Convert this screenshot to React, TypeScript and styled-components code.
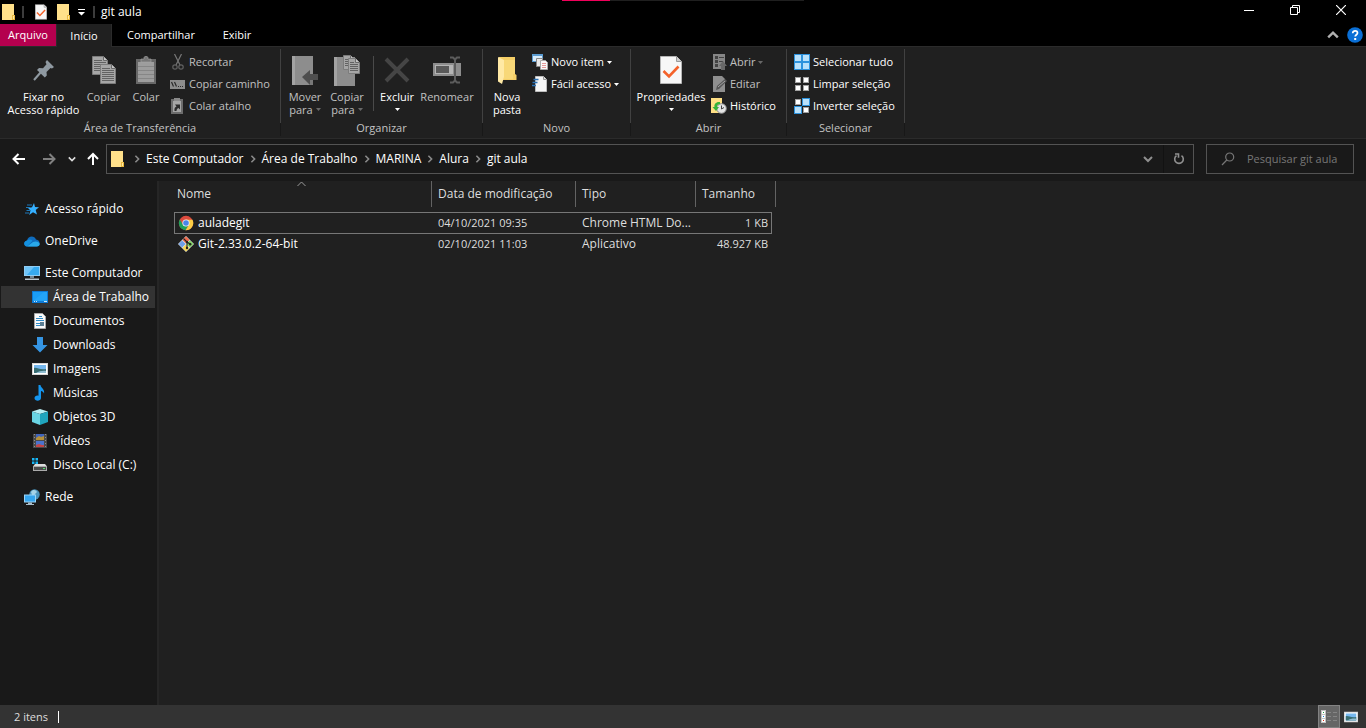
import React from "react";
import styled, { createGlobalStyle, css } from "styled-components";

const GlobalStyle = createGlobalStyle`
  *, *::before, *::after { box-sizing: border-box; }
  body {
    margin: 0;
    background: #202020;
    color: #ffffff;
    font-family: "Open Sans", "Noto Sans", sans-serif;
    font-size: 12px;
    line-height: 16px;
  }
  button, input { font: inherit; color: inherit; }
  svg { display: block; flex: none; }
`;

const Window = styled.div`
  display: flex;
  flex-direction: column;
  min-height: 100vh;
`;

const plainButton = css`
  border: 0;
  padding: 0;
  margin: 0;
  background: transparent;
`;

/* Title bar */

const TitleBar = styled.header`
  position: relative;
  display: flex;
  align-items: center;
  height: 24px;
  background: #000000;
`;

const QuickTools = styled.div`
  display: flex;
  align-items: center;
  padding-left: 1px;
`;

const QuickButton = styled.button<{ $width: number }>`
  ${plainButton}
  display: flex;
  justify-content: center;
  width: ${(p) => p.$width}px;
`;

const TitleDivider = styled.span`
  width: 2px;
  height: 12px;
  margin: 0 5px;
  background: #3c3c3c;
`;

const WindowTitle = styled.h1`
  margin: 0;
  padding-left: 1px;
  font-size: 12px;
  font-weight: 400;
`;

const WindowButtons = styled.div`
  display: flex;
  align-self: stretch;
  margin-left: auto;
  padding-right: 2px;
`;

const WindowButton = styled.button`
  ${plainButton}
  display: flex;
  align-items: center;
  justify-content: center;
  width: 46px;
  height: 20px;
`;

const ProgressStrip = styled.div`
  position: absolute;
  top: 0;
  left: 50%;
  width: 242px;
  height: 1px;
  margin-left: -121px;
  background: #1f1f1f;
`;

const ProgressValue = styled.div`
  width: 48px;
  height: 1px;
  background: #f0005a;
`;

/* Ribbon tabs */

const TabBar = styled.nav`
  display: flex;
  height: 22px;
  font-size: 11px;
  background: #000000;
`;

const Tab = styled.button<{ $variant?: "file" | "active"; $width: number }>`
  ${plainButton}
  width: ${(p) => p.$width}px;
  height: 22px;
  line-height: 22px;
  ${(p) => p.$variant === "file" && css`background: #b4004e;`}
  ${(p) =>
    p.$variant === "active" &&
    css`
      height: 23px;
      position: relative;
      background: #202020;
      border: 1px solid #2b2b2b;
      border-width: 0 1px;
    `}
`;

const TabTools = styled.div`
  display: flex;
  align-items: center;
  gap: 8px;
  margin-left: auto;
  padding-right: 3px;
`;

const IconButton = styled.button`
  ${plainButton}
  display: flex;
`;

/* Ribbon */

const Ribbon = styled.section`
  display: flex;
  height: 93px;
  padding-top: 2px;
  font-size: 11px;
  background: #202020;
  border-top: 1px solid #2b2b2b;
  border-bottom: 1px solid #2b2b2b;
`;

const Group = styled.div<{ $width: number }>`
  display: flex;
  flex-direction: column;
  width: ${(p) => p.$width}px;
  height: 87px;
  border-right: 1px solid;
  border-image: linear-gradient(#414141 84%, #181818 84%) 1;
`;

const GroupBody = styled.div<{ $pad: number }>`
  display: flex;
  height: 72px;
  padding-left: ${(p) => p.$pad}px;
`;

const GroupLabel = styled.div`
  height: 16px;
  text-align: center;
  color: #c3c3c3;
`;

const BigButton = styled.button<{ $width: number; $muted?: boolean }>`
  ${plainButton}
  display: flex;
  flex-direction: column;
  align-items: center;
  width: ${(p) => p.$width}px;
  padding-top: 4px;
  line-height: 13px;
  white-space: nowrap;
  color: ${(p) => (p.$muted ? "#c0c0c0" : "#ffffff")};
`;

const BigIcon = styled.span`
  display: flex;
  align-items: center;
  justify-content: center;
  width: 32px;
  height: 34px;
  margin-bottom: 3px;
`;

const BigLine = styled.span`
  display: flex;
  align-items: center;
  height: 13px;
  gap: 3px;
`;

const SmallList = styled.div<{ $gap: number }>`
  display: flex;
  flex-direction: column;
  padding-top: 2px;
  margin-left: ${(p) => p.$gap}px;
`;

const SmallButton = styled.button<{ $muted?: boolean }>`
  ${plainButton}
  display: flex;
  align-items: center;
  gap: 3px;
  height: 22px;
  white-space: nowrap;
  color: ${(p) => (p.$muted ? "#c0c0c0" : "#ffffff")};
`;

const InnerDivider = styled.span`
  width: 1px;
  height: 55px;
  margin: 7px 2px 0 5px;
  background: #4a4a4a;
`;

/* Address row */

const AddressRow = styled.div`
  display: flex;
  align-items: center;
  height: 42px;
  padding: 0 12px 2px 0;
  background: #191919;
`;

const NavButtons = styled.div`
  display: flex;
  align-items: center;
  width: 106px;
`;

const NavButton = styled.button<{ $width: number }>`
  ${plainButton}
  display: flex;
  justify-content: center;
  width: ${(p) => p.$width}px;
`;

const AddressBox = styled.div`
  display: flex;
  align-items: center;
  flex: 1;
  height: 30px;
  padding-left: 4px;
  border: 1px solid #535353;
`;

const CrumbIcon = styled.span`
  width: 17px;
`;

const Crumb = styled.span`
  display: flex;
  align-items: center;
`;

const CrumbButton = styled.button`
  ${plainButton}
  white-space: nowrap;
`;

const CrumbArrow = styled.span`
  display: flex;
  justify-content: center;
  width: 18px;
`;

const AddressTools = styled.div`
  display: flex;
  align-self: stretch;
  align-items: center;
  margin-left: auto;
`;

const AddressTool = styled.button`
  ${plainButton}
  display: flex;
  align-items: center;
  justify-content: center;
  width: 30px;
  height: 28px;
  & + & { border-left: 1px solid #121212; }
`;

const SearchBox = styled.label`
  display: flex;
  align-items: center;
  gap: 12px;
  width: 148px;
  height: 30px;
  margin-left: 12px;
  padding-left: 14px;
  font-size: 11px;
  border: 1px solid #535353;
`;

const SearchInput = styled.input`
  flex: 1;
  min-width: 0;
  padding: 0;
  border: 0;
  outline: 0;
  background: transparent;
  &::placeholder { color: #777777; opacity: 1; }
`;

/* Body */

const Body = styled.div`
  display: flex;
  flex: 1;
`;

const Sidebar = styled.nav`
  width: 159px;
  padding: 17px 2px 0 1px;
  background: #191919;
  border-right: 2px solid #262626;
`;

const SideList = styled.ul`
  display: flex;
  flex-direction: column;
  gap: 2px;
  margin: 0 0 10px;
  padding: 0;
  list-style: none;
`;

const SideLink = styled.a<{ $child?: boolean; $active?: boolean }>`
  display: flex;
  align-items: center;
  gap: 5px;
  height: 22px;
  padding-left: ${(p) => (p.$child ? 31 : 23)}px;
  color: #ffffff;
  text-decoration: none;
  white-space: nowrap;
  background: ${(p) => (p.$active ? "#333333" : "transparent")};
`;

const Content = styled.main`
  flex: 1;
  padding-left: 15px;
  background: #202020;
`;

const FileTable = styled.table`
  width: 602px;
  table-layout: fixed;
  border-collapse: separate;
  border-spacing: 0;
`;

const HeadCell = styled.th<{ $width: number; $first?: boolean }>`
  position: relative;
  width: ${(p) => p.$width}px;
  height: 26px;
  padding: 0 0 0 ${(p) => (p.$first ? 3 : 6)}px;
  border-right: 1px solid #636363;
  font-weight: 400;
  text-align: left;
  color: #dedede;
`;

const SortMark = styled.span`
  position: absolute;
  top: 0;
  left: 50%;
  margin-left: -6px;
`;

const Rows = styled.tbody`
  &::before {
    content: "";
    display: block;
    height: 5px;
  }
`;

const Row = styled.tr<{ $focused?: boolean }>`
  position: relative;
  ${(p) =>
    p.$focused &&
    css`
      &::after {
        content: "";
        position: absolute;
        inset: 0 4px -1px 0;
        border: 1px solid #777777;
      }
    `}
`;

const Cell = styled.td`
  height: 21px;
  padding: 0 8px 0 6px;
  color: #dedede;
  white-space: nowrap;
`;

const NameCell = styled(Cell)`
  padding-left: 4px;
  color: #ffffff;
`;

const DateCell = styled(Cell)`
  font-size: 11px;
`;

const SizeCell = styled(Cell)`
  font-size: 11px;
  text-align: right;
`;

const FileName = styled.span`
  display: flex;
  align-items: center;
  gap: 4px;
`;

/* Status bar */

const StatusBar = styled.footer`
  display: flex;
  align-items: center;
  height: 23px;
  padding: 0 4px 0 14px;
  font-size: 11px;
  background: #333333;
`;

const StatusText = styled.span`
  padding-right: 10px;
  border-right: 1px solid #ffffff;
  line-height: 12px;
  color: #dedede;
`;

const ViewButtons = styled.div`
  display: flex;
  margin-left: auto;
`;

const ViewButton = styled.button<{ $active?: boolean }>`
  ${plainButton}
  display: flex;
  align-items: center;
  justify-content: center;
  width: 22px;
  height: 23px;
  ${(p) =>
    p.$active &&
    css`
      background: #666666;
      border: 1px solid #838383;
    `}
`;

/* Icons */

const FolderIcon = () => (
  <svg width="14" height="16" viewBox="0 0 14 16">
    <path d="M0 0h12v11h1v5H0z" fill="#ffe08a" />
    <path d="M10 11h3v5h-3z" fill="#e9b93f" />
    <path d="M11 12h1v3h-1z" fill="#ffe9a8" />
  </svg>
);

const PropsIcon = ({ w, h }: { w: number; h: number }) => (
  <svg width={w} height={h} viewBox="0 0 22 28">
    <path d="M.5.5h16l5 5v22H.5z" fill="#f7f7f7" stroke="#b5b5b5" />
    <path d="M16.5.5v5h5" fill="#cfcfcf" stroke="#999" />
    <path d="M3.5 15l5.500 5.500L18.500 10.500" fill="none" stroke="#f4622a" strokeWidth="2.600" />
  </svg>
);

const QuickMenuIcon = () => (
  <svg width="7" height="7" viewBox="0 0 7 7">
    <path d="M0 0h7v1H0zM0 3h7L3.500 6.500z" fill="#fff" />
  </svg>
);

const DownMark = ({ muted }: { muted?: boolean }) => (
  <svg width="5" height="3" viewBox="0 0 5 3">
    <path d="M0 0h5L2.500 3z" fill={muted ? "#686868" : "#fff"} />
  </svg>
);

const MinIcon = () => (
  <svg width="10" height="10" viewBox="0 0 10 10"><path d="M0 5h10v1H0z" fill="#fff" /></svg>
);

const RestoreIcon = () => (
  <svg width="10" height="10" viewBox="0 0 10 10" fill="none" stroke="#fff">
    <path d="M.5 2.500h7v7h-7zM2.500 2V.5h7v7H8" />
  </svg>
);

const CloseIcon = () => (
  <svg width="10" height="10" viewBox="0 0 10 10" fill="none" stroke="#fff" strokeWidth="1.200">
    <path d="M0 0l10 10M10 0L0 10" />
  </svg>
);

const Chevron = ({ dir, color, size = 10 }: { dir: "up" | "down" | "right"; color: string; size?: number }) => (
  <svg width={size} height={size} viewBox="0 0 10 10" fill="none" stroke={color} strokeWidth="2">
    <path d={dir === "up" ? "M1 7l4-4 4 4" : dir === "down" ? "M1 3l4 4 4-4" : "M3 1l4 4-4 4"} />
  </svg>
);

const HelpIcon = () => (
  <svg width="16" height="16" viewBox="0 0 16 16">
    <circle cx="8" cy="8" r="7.800" fill="#0a6fd6" />
    <path d="M5.700 6.200c0-3.200 4.800-3 4.800-.2 0 1.700-2.300 1.800-2.300 3.600" fill="none" stroke="#fff" strokeWidth="1.700" />
    <path d="M7.200 11h2v2h-2z" fill="#fff" />
  </svg>
);

const PinIcon = () => (
  <svg width="22" height="22" viewBox="0 0 22 22">
    <path d="M14 1l7 7-2 1.500-1.500-.5-4 4 .3 3.500-2 2L4 11l2-2 4 .3 3.500-4L12.500 3z" fill="#8f99a1" />
    <path d="M8 13l-7 8" stroke="#8f99a1" strokeWidth="2" />
  </svg>
);

const Sheet = ({ x, y, w, h }: { x: number; y: number; w: number; h: number }) => (
  <g>
    <path d={`M${x + 0.5} ${y + 0.5}h${w - 5}l4 4v${h - 5}h-${w - 1}z`} fill="#a6a6a6" stroke="#7c7c7c" />
    <path d={`M${x + w - 4.5} ${y + 0.5}v4h4`} fill="#c4c4c4" stroke="#6b6b6b" />
    {Array.from({ length: Math.floor((h - 6) / 2) }, (_, i) => (
      <path key={i} d={`M${x + 2} ${y + 4.5 + i * 2}h${i === 0 ? w - 8 : w - 4}`} stroke="#626262" />
    ))}
  </g>
);

const CopyIcon = () => (
  <svg width="24" height="28" viewBox="0 0 24 28">
    <Sheet x={0} y={0} w={16} h={19} />
    <Sheet x={8} y={8} w={16} h={20} />
  </svg>
);

const PasteIcon = () => (
  <svg width="20" height="28" viewBox="0 0 20 28">
    <path d="M0 3h20v25H0z" fill="#686868" />
    <path d="M2 6h16v20H2z" fill="#9d9d9d" />
    <path d="M5 3h3V1.500C8 0 12 0 12 1.500V3h3v3H5z" fill="#777" stroke="#aaa" strokeWidth=".6" />
    <path d="M2 10.500h16M2 14.500h16M2 18.500h16M2 22.500h16" stroke="#868686" />
  </svg>
);

const CutIcon = () => (
  <svg width="16" height="16" viewBox="0 0 16 16" fill="none" stroke="#777" strokeWidth="1.200">
    <path d="M4.500 0L10 11M11.500 0L6 11" />
    <circle cx="5" cy="13" r="2.200" stroke="#606060" />
    <circle cx="11" cy="13" r="2.200" stroke="#606060" />
  </svg>
);

const PathIcon = () => (
  <svg width="16" height="16" viewBox="0 0 16 16">
    <path d="M0 4h15v9H0z" fill="#8d8d8d" />
    <path d="M1.500 6l2 4.500M4.500 6l2 4.500" stroke="#2a2a2a" strokeWidth="1.200" />
    <path d="M8 10h1v1H8zM10 10h1v1h-1zM12 10h1v1h-1z" fill="#2a2a2a" />
  </svg>
);

const ShortcutIcon = () => (
  <svg width="16" height="16" viewBox="0 0 16 16">
    <path d="M1 1h12v15H1z" fill="#6c6c6c" />
    <path d="M3 3h8v11H3z" fill="#a5a5a5" />
    <path d="M4 0h6v3H4z" fill="#8a8a8a" />
    <path d="M4.500 13c-.5-3 .8-4 2-4.500L5 6.500h5v5L8.500 10C7 10.500 6.500 12 6.500 13z" fill="#2b2b2b" />
  </svg>
);

const MoveIcon = () => (
  <svg width="28" height="29" viewBox="0 0 28 29">
    <path d="M1 0h21v29H1z" fill="#8d8d8d" />
    <path d="M1 0h3v29H1z" fill="#a3a3a3" />
    <path d="M19 18h3v11h-3z" fill="#777" />
    <path d="M11 21l8-7v4h8v6h-8v5z" fill="#4e4e4e" />
  </svg>
);

const CopyToIcon = () => (
  <svg width="28" height="31" viewBox="0 0 28 31">
    <path d="M1 2h21v29H1z" fill="#8d8d8d" />
    <path d="M1 2h3v29H1z" fill="#a3a3a3" />
    <Sheet x={10} y={0} w={12} h={15} />
    <Sheet x={15} y={3} w={12} h={16} />
  </svg>
);

const DeleteIcon = () => (
  <svg width="26" height="26" viewBox="0 0 26 26">
    <path d="M2 2l22 22M24 2L2 24" stroke="#454545" strokeWidth="4" />
  </svg>
);

const RenameIcon = () => (
  <svg width="28" height="28" viewBox="0 0 28 28">
    <path d="M0 7h28v13H0z" fill="#8d8d8d" />
    <path d="M2 9h18v9H2z" fill="#b4b4b4" />
    <path d="M3 10h13v7H3z" fill="#595959" />
    <path d="M17 1.500h3l2 2 2-2h3M22 3v21M17 26.500h3l2-2 2 2h3" fill="none" stroke="#5c5c5c" strokeWidth="2" />
  </svg>
);

const NewFolderIcon = () => (
  <svg width="20" height="28" viewBox="0 0 20 28">
    <path d="M2 1h16v17l1.500 1v5H2z" fill="#f5cf67" />
    <path d="M1 1l6 3v17l-2 7-4-2.500z" fill="#ffe9a5" />
    <path d="M7 4h11v14h-2v5H7z" fill="#f8d878" />
  </svg>
);

const NewItemIcon = () => (
  <svg width="16" height="16" viewBox="0 0 16 16">
    <path d="M0 0h11v8H0z" fill="#5b9bd0" />
    <path d="M1 2h9v5H1z" fill="#d9ecfa" />
    <path d="M4.500 4.500h6v8h-6z" fill="#e9e9e9" stroke="#888" />
    <path d="M8.500 6.500h5l2 2v7h-7z" fill="#fafafa" stroke="#aaa" />
    <path d="M10 9.500h4M10 11.500h4M10 13.500h4" stroke="#e69a9a" />
  </svg>
);

const EasyAccessIcon = () => (
  <svg width="16" height="16" viewBox="0 0 16 16">
    <path d="M3.500.5h8l3 3v12h-11z" fill="#f6f6f6" stroke="#bdbdbd" />
    <path d="M11.500.5v3h3" fill="#ddd" stroke="#999" />
    <path d="M1.500 3.500h5M.5 6.500h5M0 9.500h4" stroke="#2c72b5" strokeWidth="1.400" />
  </svg>
);

const OpenIcon = () => (
  <svg width="16" height="16" viewBox="0 0 16 16">
    <path d="M2 0h12v15H2z" fill="#868686" />
    <path d="M4 2h3v3H4zM4 6h3v3H4zM4 10h3v3H4zM8 3h5v1H8zM8 7h4v1H8z" fill="#424242" />
    <path d="M10 16v-4H8l4-5 4 5h-2v4z" fill="#686868" />
  </svg>
);

const EditIcon = () => (
  <svg width="16" height="16" viewBox="0 0 16 16">
    <path d="M2 0h9l3 3v13H2z" fill="#8f8f8f" />
    <path d="M5 14l1-4 8-7 2 2-8 8z" fill="#555" />
    <path d="M7 11l7-6" stroke="#a5a5a5" />
  </svg>
);

const HistoryIcon = () => (
  <svg width="16" height="16" viewBox="0 0 16 16">
    <path d="M0 0h11v15H0z" fill="#ffdf85" />
    <circle cx="10.500" cy="10.500" r="4.800" fill="#e4e4e4" stroke="#8c8c8c" />
    <path d="M10.500 7.500v3.500l2.500-1.500" fill="none" stroke="#444" />
    <path d="M9 4c-4-.5-6 2-5.500 5H1.500L5 13l3-4H6c0-2 1-3 3-2.500z" fill="#35b338" />
  </svg>
);

const GridIcon = ({ kind }: { kind: "all" | "none" | "invert" }) => {
  const marked = (i: number) => kind === "all" || (kind === "invert" && (i === 1 || i === 2));
  return (
    <svg width="16" height="16" viewBox="0 0 16 16">
      {[0, 1, 2, 3].map((i) => {
        const x = (i % 2) * 8;
        const y = Math.floor(i / 2) * 8;
        return marked(i) ? (
          <g key={i}>
            <rect x={x} y={y} width="8" height="8" fill="#2e93dd" />
            <rect x={x + 1} y={y + 1} width="6" height="6" fill="#b9e1fb" />
          </g>
        ) : (
          <g key={i}>
            <rect x={x + 1} y={y + 1} width="6" height="6" fill="#a2a2a2" />
            <rect x={x + 2} y={y + 2} width="4" height="4" fill="#fff" />
          </g>
        );
      })}
    </svg>
  );
};

const Arrow = ({ dir, color }: { dir: "left" | "right" | "up"; color: string }) => (
  <svg width="14" height="14" viewBox="0 0 14 14" fill="none" stroke={color} strokeWidth="2">
    <path
      d={
        dir === "left"
          ? "M6.500 2L1.500 7l5 5M1.500 7H13"
          : dir === "right"
          ? "M7.500 2l5 5-5 5M12.500 7H1"
          : "M2 7l5-5 5 5M7 2v11"
      }
    />
  </svg>
);

const RefreshIcon = () => (
  <svg width="12" height="12" viewBox="0 0 12 12" fill="none" stroke="#8f8f8f" strokeWidth="1.600">
    <path d="M8.500 2.600A4.300 4.300 0 1 1 3.500 2.600" />
    <path d="M2 1h3.500v3.800" />
  </svg>
);

const SearchIcon = () => (
  <svg width="14" height="14" viewBox="0 0 14 14" fill="none" stroke="#777" strokeWidth="1.200">
    <circle cx="8.700" cy="5" r="4" />
    <path d="M5.800 8L1 13" />
  </svg>
);

const StarIcon = () => (
  <svg width="16" height="16" viewBox="0 0 16 16">
    <path d="M10 2l1 4 4 .3-3.300 2.700 1.300 4.500-4-2.300-3.800 2.800L6.500 9.500 4 7l4-.8z" fill="#35b0ff" />
    <path d="M3 4h5M2 6.500h4M2.500 9.500h4M1 12h4" stroke="#1d79b9" strokeWidth="1.200" />
  </svg>
);

const CloudIcon = () => (
  <svg width="16" height="16" viewBox="0 0 16 16">
    <path d="M3.500 13.500C-.8 13.300-.5 8 3 7.500 4 2.500 10.500 2 12 6.500c4.500.3 5 6.700.5 7z" fill="#0f6cbd" />
    <path d="M3 7.500c2-1.500 4-1 5.500.3L3 13.500c-4-.5-3.500-5.500 0-6z" fill="#1490df" />
    <path d="M3 13.500l6-4.500c3-1.500 6.500 0 6.700 2 0 1.500-1 2.500-3 2.500z" fill="#29a9ea" />
  </svg>
);

const ComputerIcon = () => (
  <svg width="16" height="16" viewBox="0 0 16 16">
    <path d="M0 1h16v10H0z" fill="#8fcdf5" />
    <path d="M1 2h14v8H1z" fill="#36aaf0" />
    <path d="M1 2h9L3 10H1z" fill="#6fc4f7" />
    <path d="M6 11h4v2H6z" fill="#788a97" />
    <path d="M1 13.500h14v1.500H1z" fill="#b9c7d0" />
  </svg>
);

const DesktopIcon = () => (
  <svg width="16" height="16" viewBox="0 0 16 16">
    <path d="M0 2h16v12H0z" fill="#0d7ad6" />
    <path d="M1 3h14v9H1z" fill="#1b9df5" />
    <path d="M2 12.500h1M4 12.500h1M12 12.500h3" stroke="#c9e8fc" />
    <path d="M1 12L12 3h3v9z" fill="#2cabfa" opacity=".5" />
  </svg>
);

const DocumentIcon = () => (
  <svg width="16" height="16" viewBox="0 0 16 16">
    <path d="M2.500.5h8l3 3v12h-11z" fill="#fafafa" stroke="#aaa" />
    <path d="M7 3.500h3M4 5.500h7M4 7.500h8M4 10.500h4M4 12.500h4" stroke="#318cc8" />
    <path d="M8 9h4v4H8z" fill="#5c7f94" />
  </svg>
);

const DownloadIcon = () => (
  <svg width="16" height="16" viewBox="0 0 16 16">
    <path d="M5 0h6v8h4.500L8 15.500.5 8H5z" fill="#3595e3" />
  </svg>
);

const ImageIcon = ({ size = 16 }: { size?: number }) => (
  <svg width={size} height={size} viewBox="0 0 16 16">
    <path d="M0 2h16v12H0z" fill="#d5d5d5" />
    <path d="M1 3h14v10H1z" fill="#fff" />
    <path d="M2 4h12v8H2z" fill="#76b8ef" />
    <path d="M2 7c3-1 5 2 12 1v4H2z" fill="#386d72" />
    <path d="M4 12c3-2 7-2.500 10-2v2z" fill="#91bed3" />
  </svg>
);

const MusicIcon = () => (
  <svg width="16" height="16" viewBox="0 0 16 16">
    <path d="M6.500 0h2c.2 3 4.500 4 3.500 8.500-.5-1.500-1.700-2.300-3-2.500V13c0 3.500-6.500 3.500-6.500.3 0-2.300 2.500-3.200 4-2.500z" fill="#1496ef" />
  </svg>
);

const CubeIcon = () => (
  <svg width="16" height="16" viewBox="0 0 16 16">
    <path d="M0 2.500L8 0l8 2.500L8 5z" fill="#b8eef3" />
    <path d="M0 2.500L8 5v11l-8-3z" fill="#69d4e3" />
    <path d="M16 2.500L8 5v11l8-3z" fill="#20a5bd" />
  </svg>
);

const VideoIcon = () => (
  <svg width="16" height="16" viewBox="0 0 16 16">
    <path d="M1 1h14v14H1z" fill="#4a4a4a" />
    <path d="M2.500 1v14M13.500 1v14" stroke="#8f8f8f" strokeDasharray="1 2" />
    <path d="M4 1h8v6H4z" fill="#4165bb" />
    <path d="M4 8h8v6H4z" fill="#4b73cd" />
    <path d="M4 5l3-2 2 1 3-1v4H4z" fill="#b59039" />
    <path d="M4 12l3-1 3 1h2v2H4z" fill="#c44646" />
  </svg>
);

const DriveIcon = () => (
  <svg width="16" height="16" viewBox="0 0 16 16">
    <path d="M0 1h2.500v2.500H0zM3.500 1H6v2.500H3.500zM0 4.500h2.500V7H0zM3.500 4.500H6V7H3.500z" fill="#18b5f4" />
    <path d="M3 7h10l2 2.500H1z" fill="#dddddd" />
    <path d="M1 9h14v5H1z" fill="#aaaaaa" />
    <path d="M2 10h12v3H2z" fill="#4b4b4b" />
    <path d="M11 11h2v1h-2z" fill="#4fe36b" />
  </svg>
);

const NetworkIcon = () => (
  <svg width="16" height="16" viewBox="0 0 16 16">
    <circle cx="10.500" cy="5.500" r="5.200" fill="#4c94bb" />
    <path d="M7 3c2-3 5-2 6 0l-2 2-1 3-2-2z" fill="#a5d3e7" />
    <path d="M0 5.500h12v8H0z" fill="#9bd4f7" />
    <path d="M1 6.500h10v6H1z" fill="#34a4ed" />
    <path d="M4 13.500h4V15h2v1H2v-1h2z" fill="#a8bdca" />
  </svg>
);

const ChromeIcon = () => (
  <svg width="16" height="16" viewBox="0 0 16 16">
    <circle cx="8" cy="8" r="7.200" fill="#dd4b3e" />
    <path d="M1.800 4.400A7.200 7.200 0 0 0 7.500 15.200L11 9.500 5 9.700z" fill="#21a05a" />
    <path d="M14.500 4.800H8l3.200 5-3.700 5.400A7.200 7.200 0 0 0 14.500 4.800z" fill="#fccd45" />
    <circle cx="8" cy="8" r="3.600" fill="#f5f5f5" />
    <circle cx="8" cy="8" r="2.800" fill="#4a86e8" />
  </svg>
);

const GitIcon = () => (
  <svg width="16" height="16" viewBox="0 0 16 16">
    <path d="M8 0l8 8-8 8-8-8z" fill="#e4e4e4" />
    <path d="M8 .6l3.500 3.500L8 7.600 4.500 4.100z" fill="#f0684a" />
    <path d="M4.100 4.500L7.600 8l-3.500 3.500L.6 8z" fill="#6e9fe8" />
    <path d="M11.900 4.500L15.400 8l-3.500 3.500L8.400 8z" fill="#79d35a" />
    <path d="M8 8.400l3.500 3.500L8 15.400l-3.500-3.500z" fill="#f5d54d" />
    <path d="M5.500 2.500L9 6v6M9 6l3 2" fill="none" stroke="#222" strokeWidth="1.100" />
    <circle cx="9" cy="6" r="1.200" fill="#222" />
    <circle cx="9" cy="12" r="1.200" fill="#222" />
    <circle cx="12.200" cy="8.200" r="1.200" fill="#222" />
  </svg>
);

const DetailsIcon = () => (
  <svg width="16" height="14" viewBox="0 0 16 14">
    <path d="M0 0h5v13H0z" fill="#c4c4c4" />
    <path d="M1 1h3v3H1zM1 5h3v3H1zM1 9h3v3H1z" fill="#fff" />
    <path d="M2 2h1v1H2z" fill="#229a45" />
    <path d="M2 6h1v1H2z" fill="#1482e0" />
    <path d="M2 10h1v1H2z" fill="#e02a14" />
    <path d="M6 2.500h4M12 2.500h4M6 6.500h4M12 6.500h4M6 10.500h4M12 10.500h4" stroke="#858585" />
  </svg>
);

/* Data */

const crumbs = ["Este Computador", "Área de Trabalho", "MARINA", "Alura", "git aula"];

const places = [
  { name: "Área de Trabalho", icon: <DesktopIcon />, active: true },
  { name: "Documentos", icon: <DocumentIcon /> },
  { name: "Downloads", icon: <DownloadIcon /> },
  { name: "Imagens", icon: <ImageIcon /> },
  { name: "Músicas", icon: <MusicIcon /> },
  { name: "Objetos 3D", icon: <CubeIcon /> },
  { name: "Vídeos", icon: <VideoIcon /> },
  { name: "Disco Local (C:)", icon: <DriveIcon /> },
];

const files = [
  { name: "auladegit", icon: <ChromeIcon />, date: "04/10/2021 09:35", type: "Chrome HTML Do...", size: "1 KB", focused: true },
  { name: "Git-2.33.0.2-64-bit", icon: <GitIcon />, date: "02/10/2021 11:03", type: "Aplicativo", size: "48.927 KB" },
];

type BigProps = {
  icon: React.ReactNode;
  lines: string[];
  width: number;
  muted?: boolean;
  menu?: boolean;
};

const Big = ({ icon, lines, width, muted, menu }: BigProps) => (
  <BigButton $width={width} $muted={muted}>
    <BigIcon>{icon}</BigIcon>
    {lines.map((line, i) => (
      <BigLine key={line}>
        {line}
        {menu && i === 1 && <DownMark muted={muted} />}
      </BigLine>
    ))}
    {menu && lines.length === 1 && (
      <BigLine>
        <DownMark muted={muted} />
      </BigLine>
    )}
  </BigButton>
);

type SmallProps = { icon: React.ReactNode; label: string; muted?: boolean; menu?: boolean };

const Small = ({ icon, label, muted, menu }: SmallProps) => (
  <SmallButton $muted={muted}>
    {icon}
    {label}
    {menu && <DownMark muted={muted} />}
  </SmallButton>
);

type SideProps = { name: string; icon: React.ReactNode; child?: boolean; active?: boolean };

const SideItem = ({ name, icon, child, active }: SideProps) => (
  <li>
    <SideLink href="#" $child={child} $active={active}>
      {icon}
      {name}
    </SideLink>
  </li>
);

export default function App() {
  return (
    <>
      <GlobalStyle />
      <Window>
        <TitleBar>
          <ProgressStrip>
            <ProgressValue />
          </ProgressStrip>
          <QuickTools>
            <QuickButton $width={16} aria-label="Pasta"><FolderIcon /></QuickButton>
            <TitleDivider />
            <QuickButton $width={23} aria-label="Propriedades"><PropsIcon w={12} h={16} /></QuickButton>
            <QuickButton $width={23} aria-label="Nova pasta"><FolderIcon /></QuickButton>
            <QuickButton $width={13} aria-label="Personalizar"><QuickMenuIcon /></QuickButton>
            <TitleDivider />
          </QuickTools>
          <WindowTitle>git aula</WindowTitle>
          <WindowButtons>
            <WindowButton aria-label="Minimizar"><MinIcon /></WindowButton>
            <WindowButton aria-label="Restaurar"><RestoreIcon /></WindowButton>
            <WindowButton aria-label="Fechar"><CloseIcon /></WindowButton>
          </WindowButtons>
        </TitleBar>

        <TabBar>
          <Tab $variant="file" $width={56}>Arquivo</Tab>
          <Tab $variant="active" $width={56}>Início</Tab>
          <Tab $width={98}>Compartilhar</Tab>
          <Tab $width={54}>Exibir</Tab>
          <TabTools>
            <IconButton aria-label="Recolher faixa"><Chevron dir="up" color="#b0b0b0" size={12} /></IconButton>
            <IconButton aria-label="Ajuda"><HelpIcon /></IconButton>
          </TabTools>
        </TabBar>

        <Ribbon>
          <Group $width={281}>
            <GroupBody $pad={2}>
              <Big width={83} icon={<PinIcon />} lines={["Fixar no", "Acesso rápido"]} />
              <Big width={37} muted icon={<CopyIcon />} lines={["Copiar"]} />
              <Big width={48} muted icon={<PasteIcon />} lines={["Colar"]} />
              <SmallList $gap={0}>
                <Small muted icon={<CutIcon />} label="Recortar" />
                <Small muted icon={<PathIcon />} label="Copiar caminho" />
                <Small muted icon={<ShortcutIcon />} label="Colar atalho" />
              </SmallList>
            </GroupBody>
            <GroupLabel>Área de Transferência</GroupLabel>
          </Group>
          <Group $width={202}>
            <GroupBody $pad={3}>
              <Big width={42} muted menu icon={<MoveIcon />} lines={["Mover", "para"]} />
              <Big width={42} muted menu icon={<CopyToIcon />} lines={["Copiar", "para"]} />
              <InnerDivider />
              <Big width={42} menu icon={<DeleteIcon />} lines={["Excluir"]} />
              <Big width={58} muted icon={<RenameIcon />} lines={["Renomear"]} />
            </GroupBody>
            <GroupLabel>Organizar</GroupLabel>
          </Group>
          <Group $width={148}>
            <GroupBody $pad={4}>
              <Big width={40} icon={<NewFolderIcon />} lines={["Nova", "pasta"]} />
              <SmallList $gap={5}>
                <Small menu icon={<NewItemIcon />} label="Novo item" />
                <Small menu icon={<EasyAccessIcon />} label="Fácil acesso" />
              </SmallList>
            </GroupBody>
            <GroupLabel>Novo</GroupLabel>
          </Group>
          <Group $width={156}>
            <GroupBody $pad={3}>
              <Big width={74} menu icon={<PropsIcon w={22} h={28} />} lines={["Propriedades"]} />
              <SmallList $gap={3}>
                <Small muted menu icon={<OpenIcon />} label="Abrir" />
                <Small muted icon={<EditIcon />} label="Editar" />
                <Small icon={<HistoryIcon />} label="Histórico" />
              </SmallList>
            </GroupBody>
            <GroupLabel>Abrir</GroupLabel>
          </Group>
          <Group $width={118}>
            <GroupBody $pad={7}>
              <SmallList $gap={0}>
                <Small icon={<GridIcon kind="all" />} label="Selecionar tudo" />
                <Small icon={<GridIcon kind="none" />} label="Limpar seleção" />
                <Small icon={<GridIcon kind="invert" />} label="Inverter seleção" />
              </SmallList>
            </GroupBody>
            <GroupLabel>Selecionar</GroupLabel>
          </Group>
        </Ribbon>

        <AddressRow>
          <NavButtons>
            <NavButton $width={38} aria-label="Voltar"><Arrow dir="left" color="#fff" /></NavButton>
            <NavButton $width={22} aria-label="Avançar"><Arrow dir="right" color="#808080" /></NavButton>
            <NavButton $width={24} aria-label="Locais recentes"><Chevron dir="down" color="#ddd" size={8} /></NavButton>
            <NavButton $width={18} aria-label="Acima"><Arrow dir="up" color="#fff" /></NavButton>
          </NavButtons>
          <AddressBox>
            <CrumbIcon><FolderIcon /></CrumbIcon>
            {crumbs.map((name) => (
              <Crumb key={name}>
                <CrumbArrow><Chevron dir="right" color="#8a8a8a" size={8} /></CrumbArrow>
                <CrumbButton>{name}</CrumbButton>
              </Crumb>
            ))}
            <AddressTools>
              <AddressTool aria-label="Locais anteriores"><Chevron dir="down" color="#8f8f8f" /></AddressTool>
              <AddressTool aria-label="Atualizar"><RefreshIcon /></AddressTool>
            </AddressTools>
          </AddressBox>
          <SearchBox>
            <SearchIcon />
            <SearchInput placeholder="Pesquisar git aula" aria-label="Pesquisar git aula" />
          </SearchBox>
        </AddressRow>

        <Body>
          <Sidebar>
            <SideList><SideItem name="Acesso rápido" icon={<StarIcon />} /></SideList>
            <SideList><SideItem name="OneDrive" icon={<CloudIcon />} /></SideList>
            <SideList>
              <SideItem name="Este Computador" icon={<ComputerIcon />} />
              {places.map((item) => (
                <SideItem key={item.name} child {...item} />
              ))}
            </SideList>
            <SideList><SideItem name="Rede" icon={<NetworkIcon />} /></SideList>
          </Sidebar>
          <Content>
            <FileTable>
              <thead>
                <tr>
                  <HeadCell $width={258} $first>
                    Nome
                    <SortMark>
                      <svg width="9" height="6" viewBox="0 0 9 6" fill="none" stroke="#9a9a9a">
                        <path d="M.5 5l4-4 4 4" />
                      </svg>
                    </SortMark>
                  </HeadCell>
                  <HeadCell $width={144}>Data de modificação</HeadCell>
                  <HeadCell $width={120}>Tipo</HeadCell>
                  <HeadCell $width={80}>Tamanho</HeadCell>
                </tr>
              </thead>
              <Rows>
                {files.map((f) => (
                  <Row key={f.name} $focused={f.focused}>
                    <NameCell><FileName>{f.icon}{f.name}</FileName></NameCell>
                    <DateCell>{f.date}</DateCell>
                    <Cell>{f.type}</Cell>
                    <SizeCell>{f.size}</SizeCell>
                  </Row>
                ))}
              </Rows>
            </FileTable>
          </Content>
        </Body>

        <StatusBar>
          <StatusText>2 itens</StatusText>
          <ViewButtons>
            <ViewButton $active aria-label="Detalhes"><DetailsIcon /></ViewButton>
            <ViewButton aria-label="Ícones grandes"><ImageIcon size={14} /></ViewButton>
          </ViewButtons>
        </StatusBar>
      </Window>
    </>
  );
}
